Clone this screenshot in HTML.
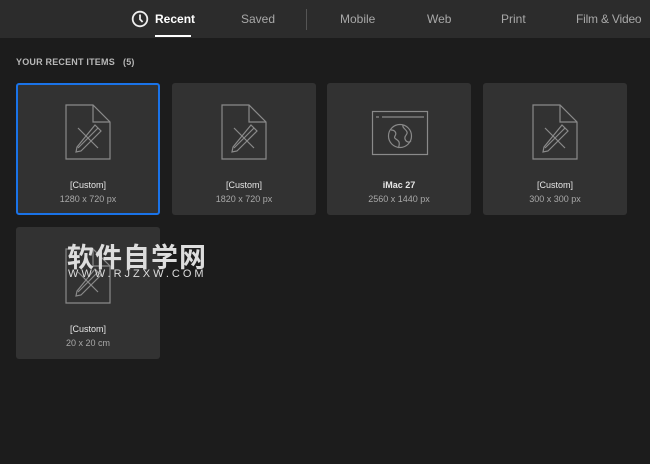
<!DOCTYPE html>
<html><head><meta charset="utf-8"><style>
*{margin:0;padding:0;box-sizing:border-box}
body{width:650px;height:464px;background:#1c1c1c;font-family:"Liberation Sans","Noto Sans CJK SC",sans-serif;position:relative;overflow:hidden}
.hdr{position:absolute;left:0;top:0;width:650px;height:38px;background:#2c2c2c}
.tab{position:absolute;top:12px;font-size:12px;color:#a8a8a8;white-space:nowrap}
.h{position:absolute;left:16px;top:57px;font-size:9px;font-weight:bold;color:#b8b8b8;letter-spacing:.2px}
.card{position:absolute;width:144px;height:132px;background:#323232;border-radius:3px}
.card.sel{border:2px solid #1a73e8}
.card svg{position:absolute;left:0;top:0}
.t{position:absolute;left:0;width:100%;text-align:center;top:97px;font-size:9px;color:#e6e6e6}
.s{position:absolute;left:0;width:100%;text-align:center;top:111px;font-size:9px;color:#a8a8a8}
.sel .t{top:95px}.sel .s{top:109px}
.wm{position:absolute;left:67px;top:244px;font-size:27px;font-weight:bold;color:#ddd;letter-spacing:1px;line-height:28px}
.wm2{position:absolute;left:68px;top:268px;font-size:11px;color:#ddd;letter-spacing:3px}
</style></head><body>
<div class="hdr">
<svg style="position:absolute;left:131px;top:10px" width="18" height="18" viewBox="0 0 18 18"><circle cx="9" cy="9" r="7.3" fill="none" stroke="#eee" stroke-width="1.8"/><path d="M9 4.5V9.3L11.6 12" fill="none" stroke="#eee" stroke-width="1.8"/></svg>
<div class="tab" style="left:155px;color:#fff;font-weight:bold">Recent</div>
<div style="position:absolute;left:155px;top:35px;width:36px;height:2px;background:#fff"></div>
<div class="tab" style="left:241px">Saved</div>
<div style="position:absolute;left:306px;top:9px;width:1px;height:21px;background:#555"></div>
<div class="tab" style="left:340px">Mobile</div>
<div class="tab" style="left:427px">Web</div>
<div class="tab" style="left:501px">Print</div>
<div class="tab" style="left:576px;letter-spacing:-0.2px">Film &amp; Video</div>
</div>
<div class="h">YOUR RECENT ITEMS &nbsp;&nbsp;(5)</div>

<div class="card sel" style="left:16px;top:83px"><svg width="144" height="132"><g transform="translate(-2,-2)" fill="none" stroke="#8a8a8a" stroke-width="1.2"><path d="M50 22H77L94 39V76H50Z"/><path d="M77 22V39H94"/><path d="M62 45L82 65M82 45L62 65"/><path d="M79 42L85 48L65 68L60 69L61 64Z"/></g></svg><div class="t">[Custom]</div><div class="s">1280 x 720 px</div></div>

<div class="card" style="left:172px;top:83px"><svg width="144" height="132"><g fill="none" stroke="#8a8a8a" stroke-width="1.2"><path d="M50 22H77L94 39V76H50Z"/><path d="M77 22V39H94"/><path d="M62 45L82 65M82 45L62 65"/><path d="M79 42L85 48L65 68L60 69L61 64Z"/></g></svg><div class="t">[Custom]</div><div class="s">1820 x 720 px</div></div>

<div class="card" style="left:327px;top:83px"><svg width="144" height="132"><g fill="none" stroke="#8a8a8a" stroke-width="1.2"><rect x="45.5" y="28.5" width="55" height="43"/><path d="M49 34H52M55 34H97"/><circle cx="73" cy="53" r="11.5"/><path d="M64 47C68 47 70 50 68 53C66 56 71 56 72 59C73 62 71 64 72 65M76 42C75 45 79 46 80 49C81 52 77 52 78 56C79 59 82 60 84 58"/></g></svg><div class="t" style="font-weight:bold">iMac 27</div><div class="s">2560 x 1440 px</div></div>

<div class="card" style="left:483px;top:83px"><svg width="144" height="132"><g fill="none" stroke="#8a8a8a" stroke-width="1.2"><path d="M50 22H77L94 39V76H50Z"/><path d="M77 22V39H94"/><path d="M62 45L82 65M82 45L62 65"/><path d="M79 42L85 48L65 68L60 69L61 64Z"/></g></svg><div class="t">[Custom]</div><div class="s">300 x 300 px</div></div>

<div class="card" style="left:16px;top:227px"><svg width="144" height="132"><g fill="none" stroke="#8a8a8a" stroke-width="1.2"><path d="M50 22H77L94 39V76H50Z"/><path d="M77 22V39H94"/><path d="M62 45L82 65M82 45L62 65"/><path d="M79 42L85 48L65 68L60 69L61 64Z"/></g></svg><div class="t">[Custom]</div><div class="s">20 x 20 cm</div></div>

<div class="wm">软件自学网</div>
<div class="wm2">WWW.RJZXW.COM</div>
</body></html>
